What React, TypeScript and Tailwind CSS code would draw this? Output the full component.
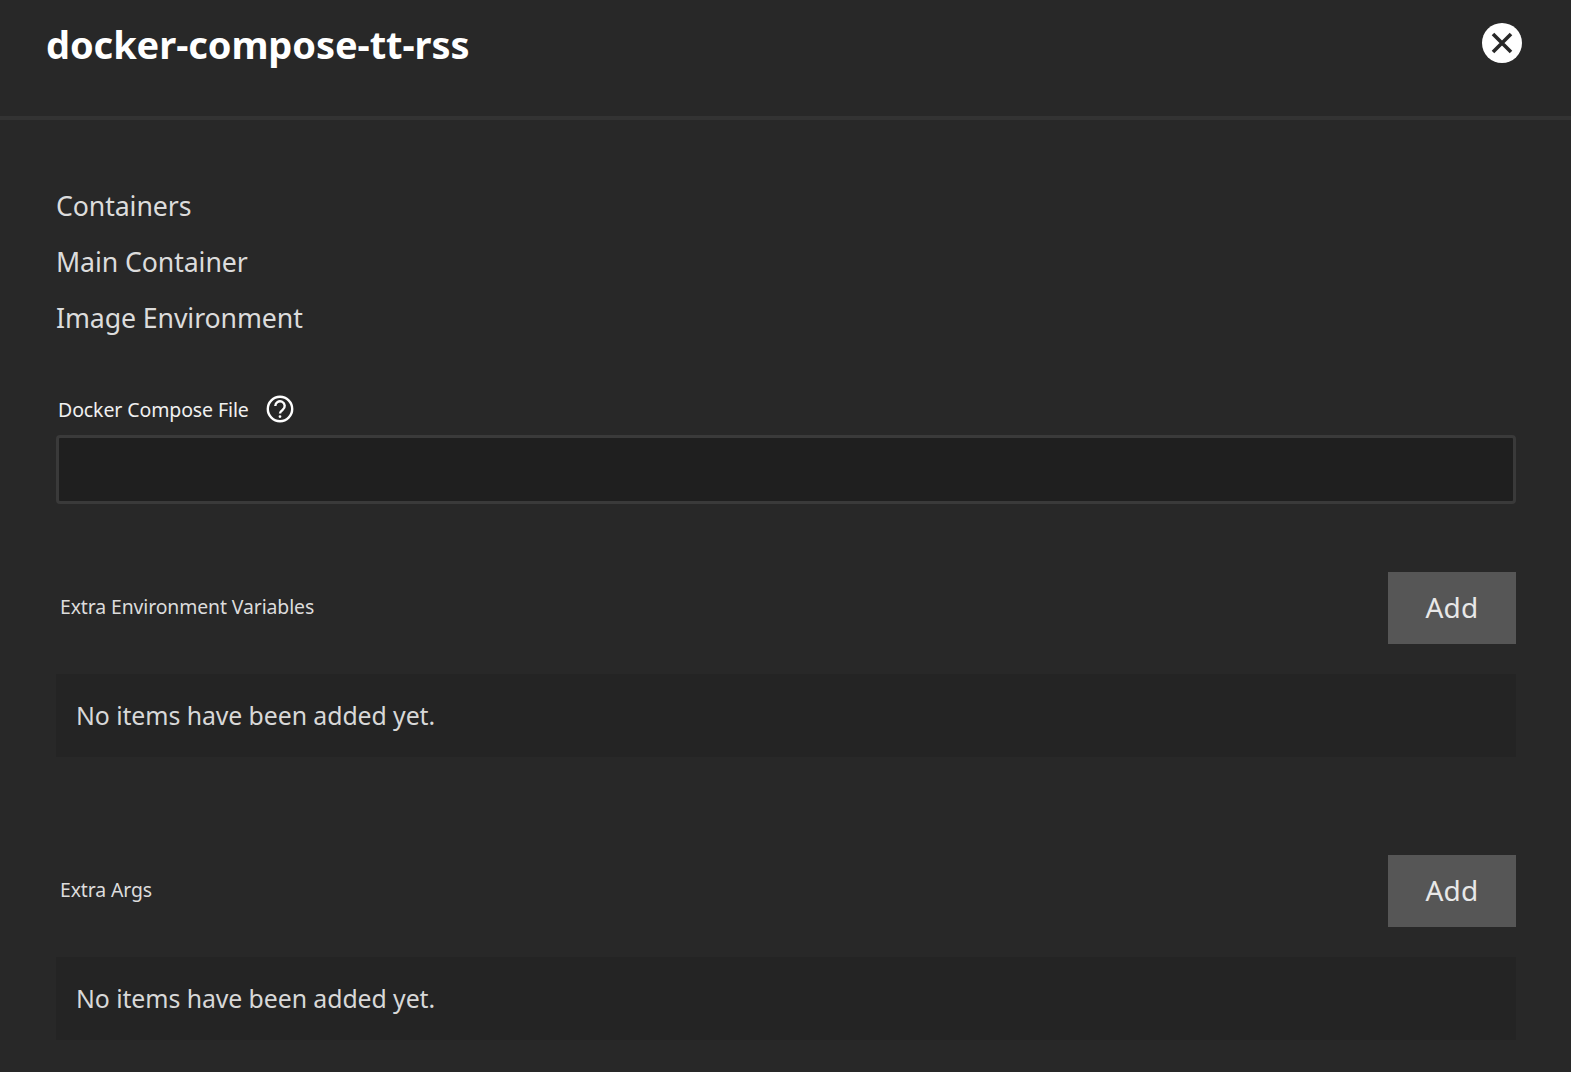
import React from "react";

const body = { fontFamily: '"Noto Sans", "Open Sans", sans-serif' };

function ListSection({ label, className }: { label: string; className: string }) {
  return (
    <section className={className}>
      <div className="flex items-center justify-between h-[72px]">
        <span className="pl-1 text-[19.4px] text-[#dcdcdc] tracking-[-0.1px] leading-none -mt-0.5">{label}</span>
        <button className="w-32 h-[72px] bg-[#565656] text-[#e8e8e8] text-[28px] tracking-[0.3px] leading-none pb-0.5">Add</button>
      </div>
      <div className="mt-[30px] h-[83px] bg-[#242424] flex items-center pl-5 text-[24.85px] text-[#d8d8d8] tracking-[-0.08px]">
        No items have been added yet.
      </div>
    </section>
  );
}

export default function App() {
  return (
    <div style={body} className="w-full h-[1072px] overflow-hidden bg-[#282828] text-white">
      <header className="h-[120px] border-b-4 border-[#333333] flex justify-between pl-[46px] pr-[49px]">
        <h1 className="mt-[18px] text-[38px] leading-[52px] font-bold tracking-[-0.08px] text-white">docker-compose-tt-rss</h1>
        <button className="mt-[23px] w-10 h-10 rounded-full bg-white flex items-center justify-center" aria-label="Close">
          <svg width="24" height="24" viewBox="0 0 24 24" fill="none" stroke="#282828" strokeWidth="3.6">
            <path d="M3 3 21 21M21 3 3 21" />
          </svg>
        </button>
      </header>
      <main className="pl-[56px] pr-[55px]">
        <div className="pt-[58px] text-[26.7px] leading-[56px] text-[#dcdcdc] tracking-[-0.1px]">
          <div>Containers</div>
          <div>Main Container</div>
          <div>Image Environment</div>
        </div>
        <div className="mt-[46px] flex items-center h-[32px] pl-0.5 text-[#f0f0f0]">
          <span className="text-[19.5px] tracking-[-0.1px] pt-1">Docker Compose File</span>
          <svg className="ml-[17px] mt-0.5" width="28" height="28" viewBox="0 0 28 28" fill="none" stroke="#ffffff" strokeWidth="2.4">
            <circle cx="14" cy="14" r="12.2" />
            <path d="M9.3 11a4.7 4.7 0 1 1 7.4 3.8c-1.6 1.1-2.7 1.8-2.7 3.7" />
            <circle cx="14" cy="21.6" r="0.7" fill="#ffffff" strokeWidth="1.4" />
          </svg>
        </div>
        <div className="mt-[11px] h-[69px] rounded border-[3px] border-[#3a3a3a] bg-[#1f1f1f]" />
        <ListSection label="Extra Environment Variables" className="mt-[68px]" />
        <ListSection label="Extra Args" className="mt-[98px]" />
      </main>
    </div>
  );
}
